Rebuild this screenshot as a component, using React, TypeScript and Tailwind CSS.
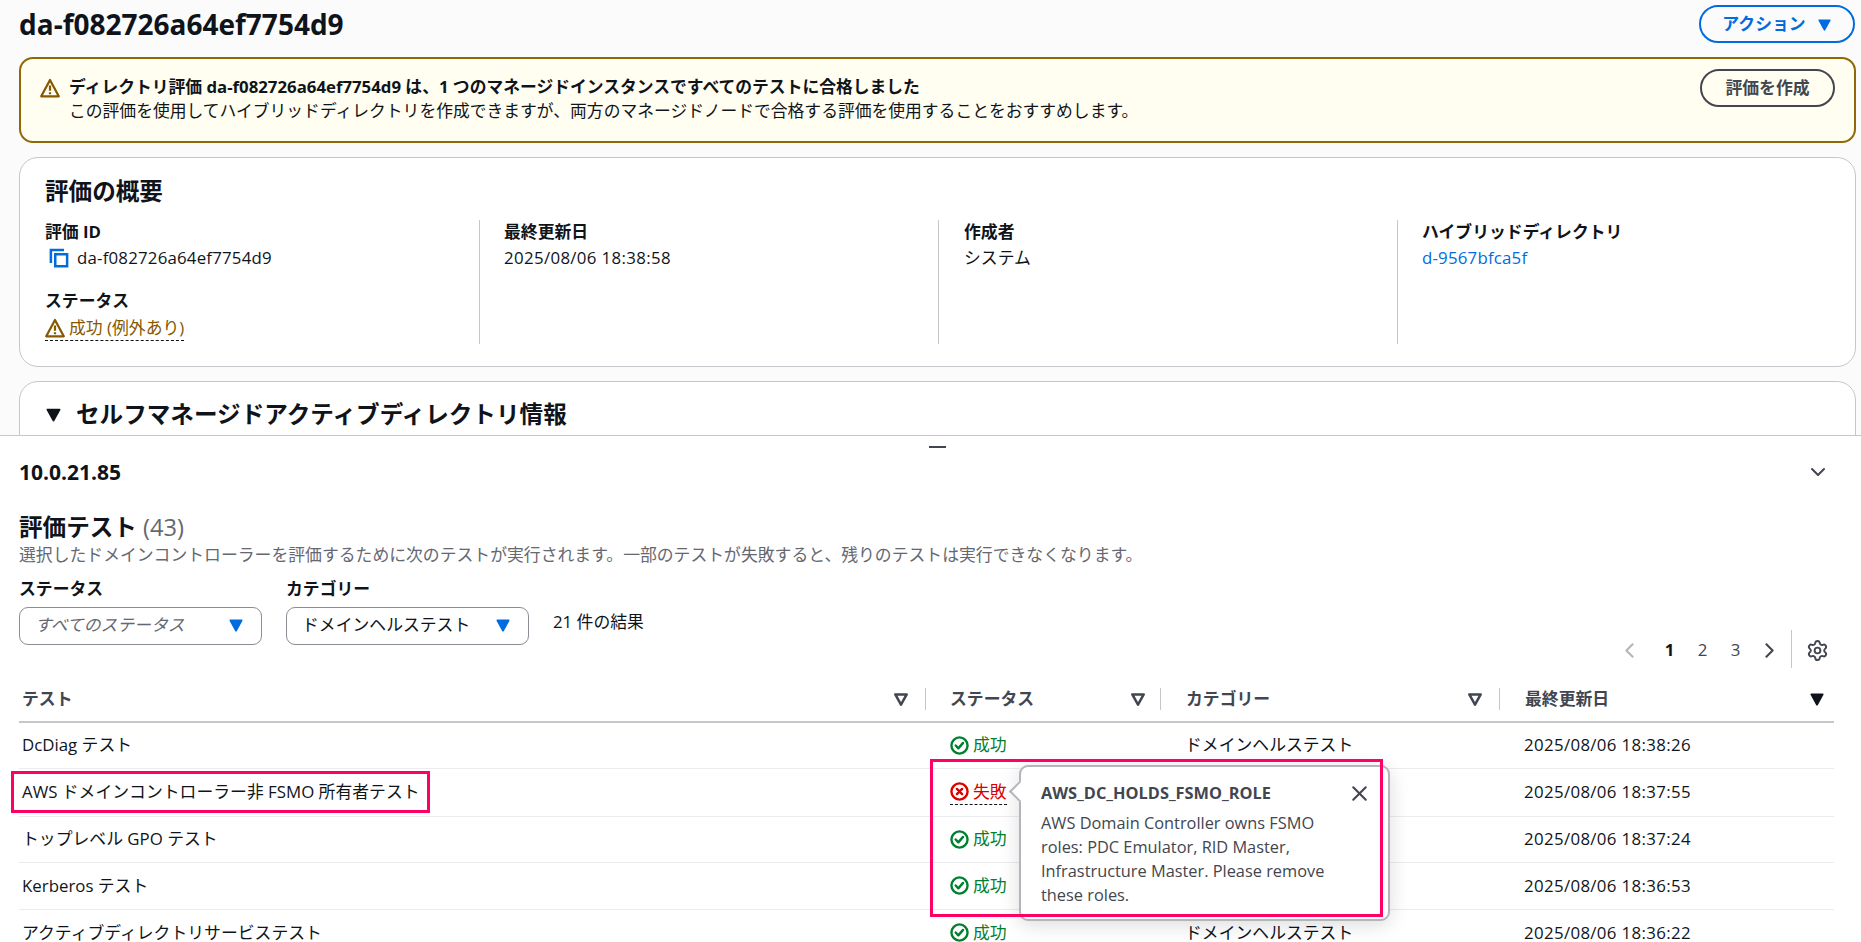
import { ChevronDown, ChevronLeft, ChevronRight, Settings, X } from "lucide-react";

function WarningIcon({ className }: { className: string }) {
  return (
    <svg viewBox="0 0 16 16" className={className} fill="none" stroke="currentColor" strokeWidth="1.8" strokeLinejoin="round">
      <path d="M8 1.6 15 14.6H1L8 1.6Z" />
      <path d="M8 6v4.2M8 11.4v1.6" />
    </svg>
  );
}

function CopyIcon() {
  return (
    <svg viewBox="0 0 16 16" className="h-[20px] w-[20px] shrink-0 text-[#006ce0]" fill="none" stroke="currentColor" strokeWidth="2">
      <path d="M1.5 12V1.5H12" />
      <path d="M5 5h9.5v9.5H5z" />
    </svg>
  );
}

function SuccessIcon() {
  return (
    <svg viewBox="0 0 16 16" className="h-[19px] w-[19px] shrink-0" fill="none" stroke="currentColor" strokeWidth="2">
      <circle cx="8" cy="8" r="6.8" />
      <path d="m4.8 8 2.2 2.4 4-4.6" strokeLinecap="round" strokeLinejoin="round" />
    </svg>
  );
}

function ErrorIcon() {
  return (
    <svg viewBox="0 0 16 16" className="h-[19px] w-[19px] shrink-0" fill="none" stroke="currentColor" strokeWidth="2">
      <circle cx="8" cy="8" r="6.8" />
      <path d="m5.8 5.8 4.4 4.4M10.2 5.8l-4.4 4.4" strokeLinecap="round" />
    </svg>
  );
}

function Caret({ className }: { className: string }) {
  return (
    <svg viewBox="0 0 14 14" className={className} fill="currentColor" stroke="currentColor" strokeWidth="1.5" strokeLinejoin="round">
      <path d="M2 3h10L7 12 2 3Z" />
    </svg>
  );
}

function FilterCaret() {
  return (
    <svg viewBox="0 0 14 14" className="h-[16px] w-[16px]" fill="none" stroke="#424650" strokeWidth="2.2" strokeLinejoin="round">
      <path d="M2 3h10L7 12 2 3Z" />
    </svg>
  );
}

const CATEGORIA = "ドメインヘルステスト";

const LINHAS = [
  { teste: "DcDiag テスト", data: "2025/08/06 18:38:26", h: "h-[46px]" },
  { teste: "AWS ドメインコントローラー非 FSMO 所有者テスト", data: "2025/08/06 18:37:55", h: "h-[48px]", falhou: true },
  { teste: "トップレベル GPO テスト", data: "2025/08/06 18:37:24", h: "h-[46px]" },
  { teste: "Kerberos テスト", data: "2025/08/06 18:36:53", h: "h-[47px]" },
  { teste: "アクティブディレクトリサービステスト", data: "2025/08/06 18:36:22", h: "h-[47px]" },
];

function Campo({ label, children, className }: { label: string; children: React.ReactNode; className: string }) {
  return (
    <div className={className}>
      <p className="font-bold">{label}</p>
      <div className="mt-[2px]">{children}</div>
    </div>
  );
}

function Select({ label, placeholder }: { label: string; placeholder?: boolean }) {
  return (
    <div className="w-[243px]">
      <p className="font-bold">{label}</p>
      <div className="mt-[6px] flex h-[38px] items-center justify-between rounded-[9px] border border-[#8c8c94] bg-white pb-[2px] pl-[15px] pr-[17px]">
        <span className={placeholder ? "italic text-[#656871]" : ""}>{label === "ステータス" ? "すべてのステータス" : CATEGORIA}</span>
        <Caret className="h-[16px] w-[16px] text-[#006ce0]" />
      </div>
    </div>
  );
}

export default function App() {
  return (
    <div className="relative flex h-[942px] w-[1861px] flex-col overflow-hidden bg-white font-['Open_Sans','Noto_Sans_CJK_JP',sans-serif] text-[16.84px] leading-[24px] text-[#0f141a]">
      <div className="h-[435px] shrink-0 overflow-hidden bg-[#fbfbfb] pl-[19px] pr-[5px]">
        <header className="flex h-[57px] items-start justify-between pt-[5px]">
          <h1 className="text-[28px] font-bold leading-[38px]">da-f082726a64ef7754d9</h1>
          <button className="mr-px flex h-[38px] w-[156px] items-center justify-center gap-[11px] rounded-full border-2 border-[#006ce0] font-bold text-[#006ce0]">
            アクション
            <Caret className="h-[15px] w-[15px]" />
          </button>
        </header>

        <div className="flex h-[86px] items-start justify-between rounded-[14px] border-2 border-[#906806] bg-[#fffef0] pl-[19px] pr-[19px]">
          <div className="flex gap-[9px] pt-[16px] text-[16.8px]">
            <WarningIcon className="mt-[3px] h-[20px] w-[20px] shrink-0 text-[#855900]" />
            <div>
              <p className="font-bold">ディレクトリ評価 da-f082726a64ef7754d9 は、1 つのマネージドインスタンスですべてのテストに合格しました</p>
              <p>この評価を使用してハイブリッドディレクトリを作成できますが、両方のマネージドノードで合格する評価を使用することをおすすめします。</p>
            </div>
          </div>
          <button className="mt-[10px] h-[38px] w-[135px] rounded-full border-2 border-[#424650] font-bold text-[#424650]">評価を作成</button>
        </div>

        <section className="mt-[14px] h-[210px] rounded-[19px] border border-[#c6c6cd] bg-white pl-[25px] pt-[18px]">
          <h2 className="text-[23.6px] font-bold leading-[30px]">評価の概要</h2>
          <div className="mt-[14px] grid h-[119px] grid-cols-[435px_459px_459px_1fr]">
            <div className="border-r border-[#c6c6cd]">
              <p className="font-bold">評価 ID</p>
              <div className="mt-[2px] flex items-center gap-[8px] pl-[4px]">
                <CopyIcon />
                <span className="tracking-[0.2px]">da-f082726a64ef7754d9</span>
              </div>
              <p className="mt-[19px] font-bold">ステータス</p>
              <span className="mt-[3px] inline-flex items-center gap-[4px] border-b border-dashed border-[#0f141a] text-[#855900]">
                <WarningIcon className="h-[20px] w-[20px] shrink-0" />
                成功 (例外あり)
              </span>
            </div>
            <Campo label="最終更新日" className="border-r border-[#c6c6cd] pl-[24px]">
              <span className="tracking-[0.35px]">2025/08/06 18:38:58</span>
            </Campo>
            <Campo label="作成者" className="border-r border-[#c6c6cd] pl-[25px]">
              システム
            </Campo>
            <Campo label="ハイブリッドディレクトリ" className="pl-[24px]">
              <a className="tracking-[0.2px] text-[#006ce0]">d-9567bfca5f</a>
            </Campo>
          </div>
        </section>

        <section className="mt-[14px] h-[80px] rounded-t-[19px] border border-[#c6c6cd] bg-white pl-[25px] pt-[17px]">
          <div className="flex items-center gap-[14px]">
            <Caret className="h-[17px] w-[17px] text-[#0f141a]" />
            <h2 className="text-[23.6px] font-bold leading-[30px]">セルフマネージドアクティブディレクトリ情報</h2>
          </div>
        </section>
      </div>

      <div className="min-h-0 flex-1 border-t border-[#c6c6cd] bg-white pl-[19px] pr-[27px]">
        <div className="pl-[910px] pt-[10px]">
          <div className="h-[2px] w-[17px] bg-[#424650]" />
        </div>
        <div className="mt-[12px] flex items-center justify-between">
          <h3 className="text-[21px] font-bold leading-[24px]">10.0.21.85</h3>
          <ChevronDown className="mr-[4px] h-[24px] w-[24px] text-[#424650]" strokeWidth={2} />
        </div>
        <h2 className="mt-[28px] text-[23.6px] font-bold leading-[30px]">
          評価テスト <span className="font-normal text-[#656871]">(43)</span>
        </h2>
        <p className="mt-px text-[#656871]">選択したドメインコントローラーを評価するために次のテストが実行されます。一部のテストが失敗すると、残りのテストは実行できなくなります。</p>

        <div className="mt-[10px] flex items-start justify-between">
          <div className="flex items-start gap-[24px]">
            <Select label="ステータス" placeholder />
            <Select label="カテゴリー" />
            <p className="mt-[33px]">21 件の結果</p>
          </div>
          <div className="mt-[53px] flex h-[38px] items-center pt-[2px]">
            <ChevronLeft className="h-[25px] w-[25px] text-[#b4b4bb]" strokeWidth={2} />
            <span className="ml-[11px] w-[33px] text-center font-bold">1</span>
            <span className="w-[33px] text-center text-[#424650]">2</span>
            <span className="w-[33px] text-center text-[#424650]">3</span>
            <ChevronRight className="ml-[5px] h-[25px] w-[25px] text-[#424650]" strokeWidth={2} />
            <div className="-mt-[2px] ml-[9px] h-[38px] border-l border-[#c6c6cd]" />
            <Settings className="ml-[14px] mr-[5px] h-[23px] w-[23px] text-[#424650]" strokeWidth={2} />
          </div>
        </div>

        <div className="mt-[8px]">
          <div className="grid h-[47px] grid-cols-[906px_235px_339px_335px] items-center border-b-2 border-[#c6c6cd] font-bold text-[#424650]">
            <div className="flex items-center justify-between pl-[3px] pr-[16px]">
              テスト
              <FilterCaret />
            </div>
            <div className="flex h-[22px] items-center justify-between border-l border-[#c6c6cd] pl-[24px] pr-[14px]">
              ステータス
              <FilterCaret />
            </div>
            <div className="flex h-[22px] items-center justify-between border-l border-[#c6c6cd] pl-[25px] pr-[16px]">
              カテゴリー
              <FilterCaret />
            </div>
            <div className="flex h-[22px] items-center justify-between border-l border-[#c6c6cd] pl-[25px] pr-[9px]">
              最終更新日
              <Caret className="h-[16px] w-[16px] text-[#0f141a]" />
            </div>
          </div>
          {LINHAS.map((l) => (
            <div key={l.data} className={`grid grid-cols-[906px_235px_339px_335px] items-center border-b border-[#ebebf0] pb-px ${l.h}`}>
              <div className="pl-[3px]">{l.teste}</div>
              <div className="relative flex pl-[25px]">
                {l.falhou ? (
                  <>
                    <span className="flex items-center gap-[4px] border-b border-dashed border-[#0f141a] text-[#db0000]">
                      <ErrorIcon />
                      失敗
                    </span>
                    <div className="absolute left-[94px] top-[-15px] z-10 h-[156px] w-[371px] rounded-[9px] border-2 border-[#b4b4bb] bg-white pl-[20px] pr-[16px] pt-[14px] text-[16.35px] text-[#424650] shadow-[0_4px_20px_rgba(0,7,22,0.14)]">
                      <div className="absolute left-[-9px] top-[17px] h-[15px] w-[15px] rotate-45 border-b-2 border-l-2 border-[#b4b4bb] bg-white" />
                      <div className="relative flex items-center justify-between">
                        <span className="font-bold">AWS_DC_HOLDS_FSMO_ROLE</span>
                        <X className="h-[25px] w-[25px]" strokeWidth={2} />
                      </div>
                      <p className="relative mt-[5px] w-[300px]">AWS Domain Controller owns FSMO roles: PDC Emulator, RID Master, Infrastructure Master. Please remove these roles.</p>
                    </div>
                  </>
                ) : (
                  <span className="flex items-center gap-[4px] text-[#00802f]">
                    <SuccessIcon />
                    成功
                  </span>
                )}
              </div>
              <div className="pl-[25px]">{CATEGORIA}</div>
              <div className="pl-[25px] tracking-[0.35px]">{l.data}</div>
            </div>
          ))}
        </div>
      </div>

      <div className="absolute left-[11px] top-[771px] z-20 h-[42px] w-[419px] border-[3px] border-[#ff0066]" />
      <div className="absolute left-[930px] top-[759px] z-20 h-[158px] w-[453px] border-[3px] border-[#ff0066]" />
    </div>
  );
}
